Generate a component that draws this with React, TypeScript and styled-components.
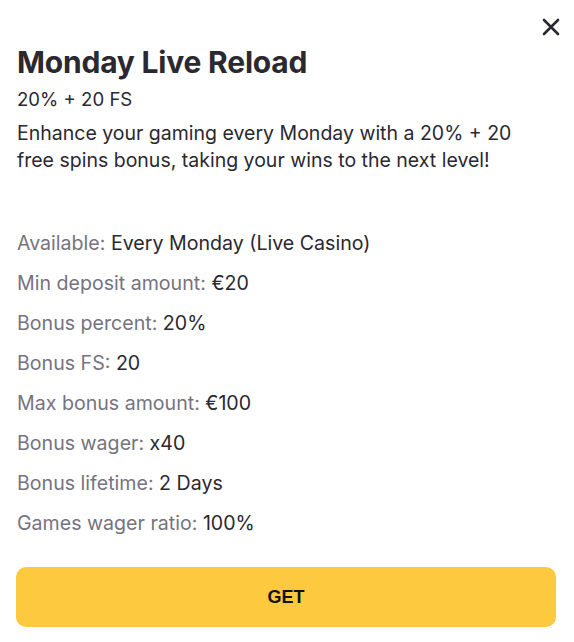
import React from "react";
import styled, { createGlobalStyle } from "styled-components";

const GlobalStyle = createGlobalStyle`
  html, body {
    margin: 0;
    padding: 0;
    background: #ffffff;
  }
  body {
    font-family: Inter, "Noto Sans", sans-serif;
    color: #2a2830;
  }
`;

const Modal = styled.div`
  width: 574px;
  height: 642px;
  box-sizing: border-box;
  padding: 14px 18px 0 16px;
  display: flex;
  flex-direction: column;
`;

const TopBar = styled.div`
  display: flex;
  justify-content: flex-end;
  height: 28px;
`;

const CloseButton = styled.button`
  padding: 0;
  width: 24px;
  height: 24px;
  border: none;
  background: transparent;
  cursor: pointer;
  display: flex;
  align-items: center;
  justify-content: center;
  margin-right: -7px;
  margin-top: 1px;
`;

const Title = styled.h1`
  margin: 2px 0 0 1px;
  font-size: 30px;
  font-weight: 700;
  line-height: 36px;
  color: #2b2930;
  letter-spacing: -0.2px;
`;

const Subtitle = styled.div`
  margin: 6px 0 0 1px;
  font-size: 18.6px;
  line-height: 26px;
`;

const Description = styled.p`
  margin: 8px 0 0 1px;
  font-size: 19.5px;
  line-height: 27px;
  max-width: 525px;
`;

const Details = styled.ul`
  list-style: none;
  margin: 56px 0 0 1px;
  padding: 0;
  display: flex;
  flex-direction: column;
  gap: 13px;
`;

const DetailRow = styled.li`
  font-size: 19.6px;
  line-height: 27px;
  color: #2a2830;
`;

const DetailLabel = styled.span`
  color: #76737f;
`;

const GetButton = styled.button`
  margin-top: 30px;
  width: 540px;
  height: 60px;
  border: none;
  border-radius: 10px;
  background: #fdc93f;
  color: #111111;
  font-family: "Liberation Sans", Arial, sans-serif;
  font-weight: 700;
  font-size: 18px;
  cursor: pointer;
`;

const details: [string, string][] = [
  ["Available", "Every Monday (Live Casino)"],
  ["Min deposit amount", "€20"],
  ["Bonus percent", "20%"],
  ["Bonus FS", "20"],
  ["Max bonus amount", "€100"],
  ["Bonus wager", "x40"],
  ["Bonus lifetime", "2 Days"],
  ["Games wager ratio", "100%"],
];

export default function App() {
  return (
    <>
      <GlobalStyle />
      <Modal>
        <TopBar>
          <CloseButton aria-label="Close">
            <svg width="18" height="18" viewBox="0 0 18 18">
              <path
                d="M2 2 L16 16 M16 2 L2 16"
                stroke="#2a2830"
                strokeWidth="2.6"
                strokeLinecap="round"
              />
            </svg>
          </CloseButton>
        </TopBar>
        <Title>Monday Live Reload</Title>
        <Subtitle>20% + 20 FS</Subtitle>
        <Description>
          Enhance your gaming every Monday with a 20% + 20 free spins bonus,
          taking your wins to the next level!
        </Description>
        <Details>
          {details.map(([label, value]) => (
            <DetailRow key={label}>
              <DetailLabel>{label}:</DetailLabel> {value}
            </DetailRow>
          ))}
        </Details>
        <GetButton>GET</GetButton>
      </Modal>
    </>
  );
}
